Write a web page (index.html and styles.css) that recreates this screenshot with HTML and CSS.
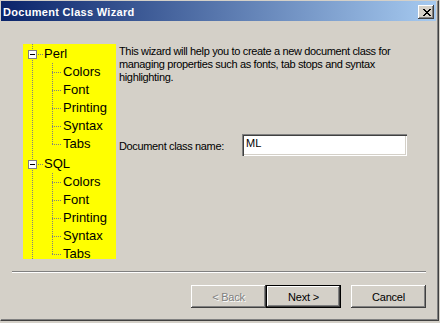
FILE: index.html
```html
<!DOCTYPE html>
<html>
<head>
<meta charset="utf-8">
<title>Document Class Wizard</title>
<link rel="stylesheet" href="styles.css">
</head>
<body>
<div class="window">
  <div class="titlebar">
    <span class="title">Document Class Wizard</span>
    <span class="close">
      <svg width="8" height="7" viewBox="0 0 8 7" shape-rendering="crispEdges"><path fill="#000" d="M0 0h2v1H0z M6 0h2v1H6z M1 1h2v1H1z M5 1h2v1H5z M2 2h4v1H2z M3 3h2v1H3z M2 4h4v1H2z M1 5h2v1H1z M5 5h2v1H5z M0 6h2v1H0z M6 6h2v1H6z"/></svg>
    </span>
  </div>
  <div class="main">
    <div class="tree">
      <div class="group">
        <div class="row root"><span class="box"></span><span class="hdots"></span><span class="label">Perl</span></div>
        <div class="children">
          <div class="row child"><span class="hdots long"></span><span class="label">Colors</span></div>
          <div class="row child"><span class="hdots long"></span><span class="label">Font</span></div>
          <div class="row child"><span class="hdots long"></span><span class="label">Printing</span></div>
          <div class="row child"><span class="hdots long"></span><span class="label">Syntax</span></div>
          <div class="row child"><span class="hdots long"></span><span class="label">Tabs</span></div>
        </div>
      </div>
      <div class="group second">
        <div class="row root"><span class="box"></span><span class="hdots"></span><span class="label">SQL</span></div>
        <div class="children">
          <div class="row child"><span class="hdots long"></span><span class="label">Colors</span></div>
          <div class="row child"><span class="hdots long"></span><span class="label">Font</span></div>
          <div class="row child"><span class="hdots long"></span><span class="label">Printing</span></div>
          <div class="row child"><span class="hdots long"></span><span class="label">Syntax</span></div>
          <div class="row child"><span class="hdots long"></span><span class="label">Tabs</span></div>
        </div>
      </div>
    </div>
    <div class="content">
      <p class="intro">This wizard will help you to create a new document class for<br>managing properties such as fonts, tab stops and syntax<br>highlighting.</p>
      <div class="field">
        <span class="field-label">Document class name:</span>
        <div class="edit">ML</div>
      </div>
    </div>
  </div>
  <div class="separator"></div>
  <div class="buttons">
    <button class="btn disabled">&lt; Back</button>
    <button class="btn default">Next &gt;</button>
    <button class="btn cancel">Cancel</button>
  </div>
</div>
</body>
</html>
```
FILE: styles.css
```css
html, body {
  margin: 0;
  padding: 0;
  background: #d4d0c8;
}

body {
  font-family: "Liberation Sans", Arial, sans-serif;
  font-size: 11px;
  color: #000;
}

.window {
  box-sizing: border-box;
  width: 439px;
  height: 321px;
  border-left: 1px solid #d4d0c8;
  border-top: 1px solid #d4d0c8;
  border-right: 1px solid #404040;
  border-bottom: 1px solid #404040;
  box-shadow: inset -1px -1px 0 #808080;
  background: #d4d0c8;
  display: flex;
  flex-direction: column;
}

.titlebar {
  height: 20px;
  margin-right: 2px;
  background: linear-gradient(to right, #0a246a, #a6caf0);
  display: flex;
  justify-content: space-between;
  align-items: flex-start;
  padding-right: 2px;
  padding-left: 2px;
}

.title {
  color: #fff;
  font-weight: bold;
  font-size: 11px;
  letter-spacing: 0.3px;
  line-height: 18px;
  padding-top: 2px;
  white-space: nowrap;
}

.close {
  box-sizing: border-box;
  width: 16px;
  height: 14px;
  margin-top: 4px;
  background: #d4d0c8;
  box-shadow: inset -1px -1px 0 #404040, inset 1px 1px 0 #fff, inset -2px -2px 0 #808080;
  display: flex;
  align-items: center;
  justify-content: center;
  padding-left: 1px;
}

.close svg {
  display: block;
}

.main {
  height: 250px;
  box-sizing: border-box;
  padding: 23px 0 0 22px;
  display: flex;
  align-items: flex-start;
}

.tree {
  position: relative;
  width: 93px;
  height: 215px;
  flex: none;
  background: #ffff00;
  overflow: hidden;
  padding-top: 1px;
  box-sizing: border-box;
}

.tree::before {
  content: "";
  position: absolute;
  left: 9px;
  top: 0;
  bottom: 0;
  width: 1px;
  background: repeating-linear-gradient(to bottom, #808080 0 1px, transparent 1px 2px);
}

.group.second {
  margin-top: 2px;
}

.row {
  height: 18px;
  display: flex;
  align-items: center;
  font-size: 13px;
  line-height: 18px;
  white-space: nowrap;
}

.root {
  padding-left: 5px;
}

.child {
  padding-left: 29px;
}

.box {
  position: relative;
  box-sizing: border-box;
  width: 9px;
  height: 9px;
  border: 1px solid #808080;
  background: #fff;
  flex: none;
}

.box::after {
  content: "";
  position: absolute;
  left: 1px;
  top: 3px;
  width: 5px;
  height: 1px;
  background: #000;
}

.hdots {
  width: 6px;
  height: 1px;
  flex: none;
  background: repeating-linear-gradient(to right, transparent 0 1px, #808080 1px 2px);
}

.hdots.long {
  width: 10px;
  background: repeating-linear-gradient(to right, #808080 0 1px, transparent 1px 2px);
}

.label {
  margin-left: 1px;
}

.children {
  position: relative;
}

.children::before {
  content: "";
  position: absolute;
  left: 29px;
  top: 0;
  bottom: 9px;
  width: 1px;
  background: repeating-linear-gradient(to bottom, #808080 0 1px, transparent 1px 2px);
}

.content {
  margin-left: 3px;
  display: flex;
  flex-direction: column;
}

.intro {
  margin: 0;
  padding-top: 1px;
  line-height: 13px;
  letter-spacing: -0.35px;
  white-space: nowrap;
}

.field {
  margin-top: 50px;
  display: flex;
  align-items: flex-start;
}

.field-label {
  width: 123px;
  flex: none;
  padding-top: 6px;
  line-height: 13px;
  letter-spacing: -0.35px;
  white-space: nowrap;
}

.edit {
  box-sizing: border-box;
  width: 165px;
  height: 22px;
  padding: 3px 4px 0;
  line-height: 13px;
  background: #fff;
  box-shadow: inset 1px 1px 0 #808080, inset 2px 2px 0 #404040, inset -1px -1px 0 #fff, inset -2px -2px 0 #d4d0c8;
}

.separator {
  height: 1px;
  margin: 0 12px 0 11px;
  border-top: 1px solid #808080;
  background: #fff;
}

.buttons {
  margin-top: 12px;
  padding-right: 12px;
  display: flex;
  justify-content: flex-end;
}

.btn {
  box-sizing: border-box;
  width: 75px;
  height: 23px;
  margin: 0;
  padding: 0;
  border: none;
  background: #d4d0c8;
  font-family: "Liberation Sans", Arial, sans-serif;
  font-size: 11px;
  letter-spacing: -0.2px;
  color: #000;
  box-shadow: inset -1px -1px 0 #404040, inset 1px 1px 0 #fff, inset -2px -2px 0 #808080, inset 2px 2px 0 #d4d0c8;
}

.btn.disabled {
  color: #808080;
  text-shadow: 1px 1px 0 #fff;
}

.btn.default {
  border: 1px solid #000;
}

.btn.cancel {
  margin-left: 10px;
}
```
